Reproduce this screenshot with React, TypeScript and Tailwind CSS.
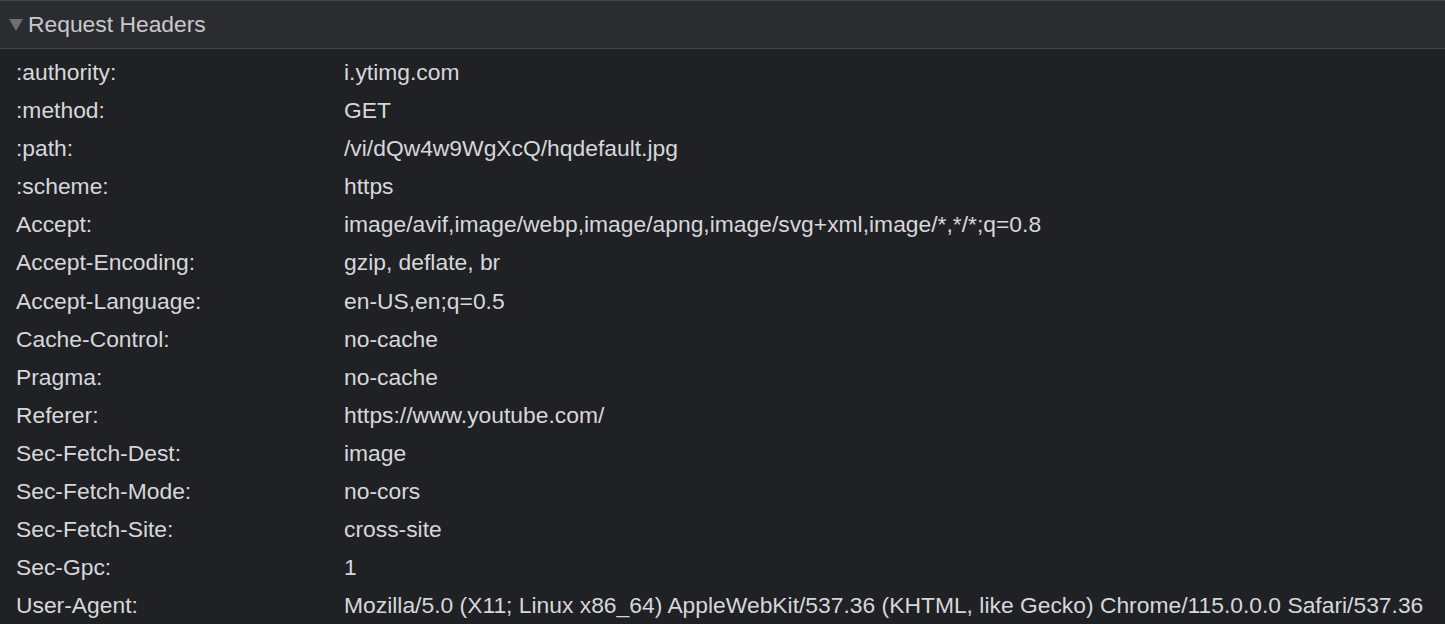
const headers: [string, string][] = [
  [":authority:", "i.ytimg.com"],
  [":method:", "GET"],
  [":path:", "/vi/dQw4w9WgXcQ/hqdefault.jpg"],
  [":scheme:", "https"],
  ["Accept:", "image/avif,image/webp,image/apng,image/svg+xml,image/*,*/*;q=0.8"],
  ["Accept-Encoding:", "gzip, deflate, br"],
  ["Accept-Language:", "en-US,en;q=0.5"],
  ["Cache-Control:", "no-cache"],
  ["Pragma:", "no-cache"],
  ["Referer:", "https://www.youtube.com/"],
  ["Sec-Fetch-Dest:", "image"],
  ["Sec-Fetch-Mode:", "no-cors"],
  ["Sec-Fetch-Site:", "cross-site"],
  ["Sec-Gpc:", "1"],
  [
    "User-Agent:",
    "Mozilla/5.0 (X11; Linux x86_64) AppleWebKit/537.36 (KHTML, like Gecko) Chrome/115.0.0.0 Safari/537.36",
  ],
];

export default function App() {
  return (
    <div className="h-[624px] w-[1445px] overflow-hidden bg-[#202124] font-['Liberation_Sans',Arial,sans-serif] text-[22.85px] text-[#d7d7db]">
      <div className="flex h-[49px] items-center border-y border-[#45454a] bg-[#2b2c30] pl-[9px] text-[#c8c8cc]">
        <svg width="14" height="12" viewBox="0 0 14 12" className="mr-[5px] mt-[1px]">
          <path d="M0 0 H14 L7 12 Z" fill="#6e6e73" />
        </svg>
        <span>Request Headers</span>
      </div>
      <div className="pt-[4px]">
        {headers.map(([name, value]) => (
          <div key={name} className="flex whitespace-nowrap leading-[38.1px]">
            <div className="w-[344px] shrink-0 pl-[16px]">{name}</div>
            <div>{value}</div>
          </div>
        ))}
      </div>
    </div>
  );
}
